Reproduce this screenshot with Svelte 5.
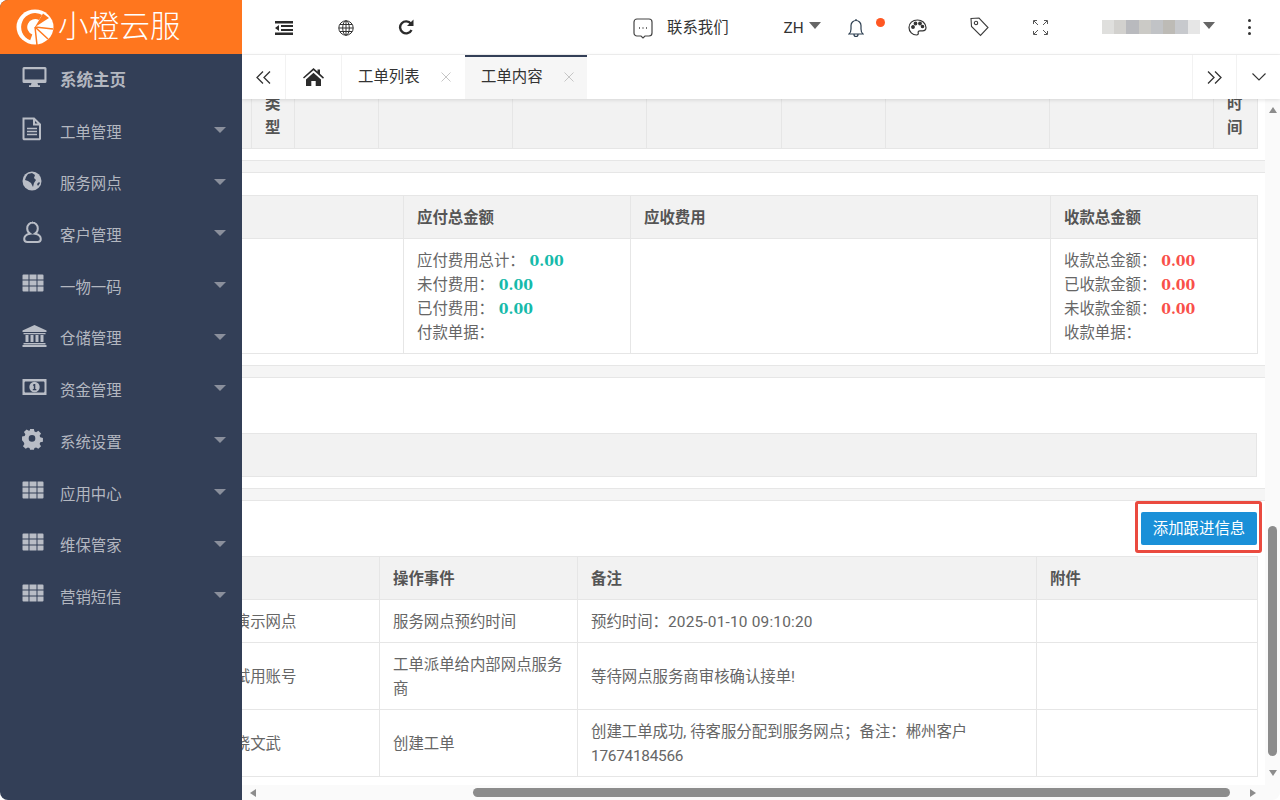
<script>
  const menu = [
    { label: '系统主页', icon: 'desktop', home: true },
    { label: '工单管理', icon: 'file' },
    { label: '服务网点', icon: 'globe' },
    { label: '客户管理', icon: 'user' },
    { label: '一物一码', icon: 'grid' },
    { label: '仓储管理', icon: 'bank' },
    { label: '资金管理', icon: 'money' },
    { label: '系统设置', icon: 'cog' },
    { label: '应用中心', icon: 'grid' },
    { label: '维保管家', icon: 'grid' },
    { label: '营销短信', icon: 'grid' }
  ];

  // column widths of the (horizontally scrolled) tables
  const typeCols = [209, 43, 84, 134, 134, 135, 104, 164, 164, 44];
  const feeCols = [361, 227, 420, 207];
  const logCols = [337, 198, 459, 221];

  const blur = ['#dfdfdd', '#d2d1ce', '#b9babe', '#cbcac6', '#c1c3c6', '#bdbbb6', '#c7c9cd', '#e6e6e6'];

  const paid = [
    ['应付费用总计', '0.00'],
    ['未付费用', '0.00'],
    ['已付费用', '0.00']
  ];
  const received = [
    ['收款总金额', '0.00'],
    ['已收款金额', '0.00'],
    ['未收款金额', '0.00']
  ];
</script>

{#snippet navIcon(name)}
  <svg class="nav-icon" width="26" height="24" viewBox="0 0 26 24">
    {#if name === 'desktop'}
      <path fill-rule="evenodd" d="M2 2h21a1.500 1.500 0 0 1 1.500 1.500v13A1.500 1.500 0 0 1 23 18h-7.500l.6 2.200H18V22H7v-1.800h1.900L9.500 18H2A1.500 1.500 0 0 1 .5 16.500v-13A1.500 1.500 0 0 1 2 2zm.6 2.200v10.300h19.800V4.200z" />
    {:else if name === 'file'}
      <path class="line" d="M1.500 1.500h10.500l6 6v14a.8.8 0 0 1-.8.8H2.300a.8.8 0 0 1-.8-.8zM12 1.500v6h6" />
      <path class="thin" d="M5 11.500h10M5 14.500h10M5 17.500h10" />
    {:else if name === 'globe'}
      <circle cx="10" cy="12" r="9.500" />
      <path class="cut" d="M6 5l4-1 3 2-1 3 2 2-2 3-1 4-2-4-3-2-3-1 1-3zM15 15l2-2 1 1-2 3z" />
    {:else if name === 'user'}
      <path class="line" d="M10 2.500a5.800 5.800 0 0 1 5.800 6c0 2.300-1.300 4.200-2.800 5.200 3.500.6 5.800 2.600 5.800 5.300 0 1.900-1.300 3-3.200 3H5.400c-1.900 0-3.200-1.100-3.200-3 0-2.700 2.300-4.700 5.800-5.300-1.500-1-2.800-2.900-2.800-5.200a5.800 5.800 0 0 1 5.800-6z" />
    {:else if name === 'grid'}
      <path d="M.5 3.500a1 1 0 0 1 1-1h5v5h-6zM7.500 2.500h7v5h-7zM15.500 2.500h5a1 1 0 0 1 1 1v4h-6zM.5 8.500h6v5h-6zM7.500 8.500h7v5h-7zM15.500 8.500h6v5h-6zM.5 14.500h6v5h-5a1 1 0 0 1-1-1zM7.500 14.500h7v5h-7zM15.500 14.500h6v4a1 1 0 0 1-1 1h-5z" />
    {:else if name === 'bank'}
      <path d="M12.500 1L24.500 6.500V8H.5V6.500zM1.500 9h22v1.200h-22zM3.500 11h3v7h-3zM8.500 11h3v7h-3zM13.500 11h3v7h-3zM18.500 11h3v7h-3zM1.500 19h22v1.500h-22zM.5 21h24v2H.5z" />
    {:else if name === 'money'}
      <path fill-rule="evenodd" d="M.5 4h24v16H.5zM3 6.500a2.500 2.500 0 0 1-.5 1v9a2.500 2.500 0 0 1 .5 1h19a2.500 2.500 0 0 1 .5-1v-9a2.500 2.500 0 0 1-.5-1z" />
      <circle cx="12.500" cy="12" r="5.200" />
      <path class="cut" d="M11.600 9h1.700v5h1v1.300h-3.500V14h1v-3.200h-1z" />
    {:else if name === 'cog'}
      <path fill-rule="evenodd" d="M8 2h4l.6 2.800 1.700.7 2.400-1.500 2.800 2.800-1.500 2.400.7 1.700 2.800.6v4l-2.800.6-.7 1.700 1.500 2.400-2.800 2.800-2.400-1.500-1.700.7-.6 1.800H8l-.6-1.800-1.700-.7-2.400 1.500-2.800-2.800 1.500-2.400-.7-1.700L-.5 14v-4l2.800-.6.7-1.700L1.500 5.300 4.300 2.500 6.700 4l1-.4zM10 8.500a3.500 3.500 0 1 0 0 7 3.500 3.500 0 0 0 0-7z" transform="translate(.5 0) scale(.95)" />
    {/if}
  </svg>
{/snippet}

{#snippet closeX()}
  <svg class="x" width="10" height="10" viewBox="0 0 10 10" fill="none" stroke="#c6c6c6" stroke-width="1"><path d="M.5.500l9 9M9.500.500l-9 9" /></svg>
{/snippet}

<div class="app">
  <aside class="side">
    <div class="logo">
      <svg class="logo-mark" width="38" height="36" viewBox="0 0 38 36">
        <ellipse cx="19" cy="18" rx="18.500" ry="17.500" fill="#fff" />
        <path d="M26 5.900A14 14 0 1 0 14.200 31.200L16.300 25.500A8 8 0 1 1 23 11z" fill="#ff7a20" />
        <path d="M19 18L27 4.500 33 9z" fill="#ff7a20" />
        <path d="M19 18L37 20M19 18L32 30M19 18L21 36" stroke="#ff7a20" stroke-width="1.500" fill="none" />
      </svg>
      <span class="logo-text">小橙云服</span>
    </div>
    <nav class="menu">
      {#each menu as item}
        <div class="item" class:home={item.home}>
          {@render navIcon(item.icon)}
          <span class="label">{item.label}</span>
          {#if !item.home}<i class="caret"></i>{/if}
        </div>
      {/each}
    </nav>
  </aside>

  <div class="main">
    <header class="top">
      <svg class="t-indent" width="18" height="14" viewBox="0 0 18 14" fill="#2b2b2b">
        <path d="M0 0h18v2.500H0zM6 4h12v2H6zM6 8h12v2H6zM0 11.500h18V14H0zM0 7l4-3v6z" />
      </svg>
      <svg class="t-globe" width="16" height="16" viewBox="0 0 16 16" fill="none" stroke="#333" stroke-width="1">
        <circle cx="8" cy="8" r="7.200" />
        <ellipse cx="8" cy="8" rx="3.300" ry="7.200" />
        <path d="M8 .8v14.400M.8 8h14.400M1.800 4.500h12.400M1.800 11.500h12.400" />
      </svg>
      <svg class="t-refresh" width="17" height="16" viewBox="0 0 17 16" fill="none">
        <path d="M13.500 11a6 6 0 1 1-.6-6.200" stroke="#2b2b2b" stroke-width="2.400" />
        <path d="M15.500.5v6.500H9z" fill="#2b2b2b" />
      </svg>

      <svg class="t-chat" width="20" height="21" viewBox="0 0 20 21" fill="none" stroke="#444" stroke-width="1.200">
        <path d="M4 1h12a3 3 0 0 1 3 3v11a3 3 0 0 1-3 3h-4l-2 2-2-2H4a3 3 0 0 1-3-3V4a3 3 0 0 1 3-3z" />
        <path d="M6 10h1M9.500 10h1M13 10h1" stroke-width="1.500" />
      </svg>
      <span class="t-contact">联系我们</span>
      <span class="t-lang">ZH</span>
      <i class="t-caret lang"></i>
      <svg class="t-bell" width="16" height="20" viewBox="0 0 16 20" fill="none" stroke="#2c3e50" stroke-width="1.200">
        <path d="M1 16h14c-1.500-1-2-2.500-2-5V7.500a5 5 0 0 0-10 0V11c0 2.500-.5 4-2 5zM6 16.500a2 2 0 0 0 4 0M8 1v1.500" />
      </svg>
      <i class="t-dot"></i>
      <svg class="t-palette" width="19" height="17" viewBox="0 0 19 17" fill="none" stroke="#333" stroke-width="1.200">
        <path d="M9.500 1C4.500 1 1 4.300 1 8.500S4.500 16 8.500 16c1.500 0 2-.9 1.700-2-.3-1.200.4-2.200 1.800-2.200h2.500c2.300 0 3.500-1.300 3.500-3.300C17.500 4 14 1 9.500 1z" />
        <circle cx="5" cy="8" r="1.300" fill="#333" />
        <circle cx="7.500" cy="4.500" r="1.300" fill="#333" />
        <circle cx="12" cy="4.500" r="1.300" fill="#333" />
        <circle cx="14.500" cy="7.500" r="1.200" fill="#333" />
      </svg>
      <svg class="t-tag" width="19" height="20" viewBox="0 0 19 20" fill="none" stroke="#3c3c3c" stroke-width="1.100">
        <path d="M1 1.500l8-.5 9 9.500-7.500 8L1.500 9.500z" />
        <circle cx="6" cy="6" r="1.700" />
      </svg>
      <svg class="t-expand" width="15" height="15" viewBox="0 0 15 15" fill="none" stroke="#555" stroke-width="1">
        <path d="M.5 4V.5H4M1 1l4 4M11 .5h3.500V4M14 1l-4 4M.5 11v3.500H4M1 14l4-4M14.500 11v3.500H11M14 14l-4-4" />
      </svg>
      <div class="t-blur">
        {#each blur as c}<span style="background:{c}"></span>{/each}
      </div>
      <i class="t-caret user"></i>
      <div class="t-more"><i></i><i></i><i></i></div>
    </header>

    <div class="tabs">
      <div class="tab-btn first">
        <svg width="15" height="13" viewBox="0 0 15 13" fill="none" stroke="#333" stroke-width="1.300"><path d="M7 .5L1 6.500l6 6M14 .5L8 6.500l6 6" /></svg>
      </div>
      <div class="tab-btn homet">
        <svg width="21" height="18" viewBox="0 0 21 18" fill="#2b2b2b"><path d="M10.500 0l4 3.500V1.500h2.500v4.300l4 3.700-1 1.200-9.500-8.400L1 10.500 0 9.500zM3 11.500l7.500-6.800 7.500 6.800V18h-5.300v-5H8.300v5H3z" /></svg>
      </div>
      <div class="tab">工单列表{@render closeX()}</div>
      <div class="tab active">工单内容{@render closeX()}</div>
      <div class="tab-fill"></div>
      <div class="tab-btn next">
        <svg width="15" height="13" viewBox="0 0 15 13" fill="none" stroke="#333" stroke-width="1.300"><path d="M1 .5l6 6-6 6M8 .5l6 6-6 6" /></svg>
      </div>
      <div class="tab-btn down">
        <svg width="14" height="8" viewBox="0 0 14 8" fill="none" stroke="#333" stroke-width="1.100"><path d="M.5.5L7 7 13.500.5" /></svg>
      </div>
    </div>

    <div class="body">
      <div class="view">
        <div class="page">
          <table>
            <colgroup>{#each typeCols as w}<col style="width:{w}px" />{/each}</colgroup>
            <thead>
              <tr>
                <th></th><th>类型</th><th></th><th></th><th></th><th></th><th></th><th></th><th></th><th>时间</th>
              </tr>
            </thead>
          </table>
          <div class="band first-band"></div>

          <table class="fee">
            <colgroup>{#each feeCols as w}<col style="width:{w}px" />{/each}</colgroup>
            <thead>
              <tr><th></th><th>应付总金额</th><th>应收费用</th><th>收款总金额</th></tr>
            </thead>
            <tbody>
              <tr>
                <td></td>
                <td>
                  {#each paid as [k, v]}
                    <div>{k}： <b class="teal">{v}</b></div>
                  {/each}
                  <div>付款单据：</div>
                </td>
                <td></td>
                <td>
                  {#each received as [k, v]}
                    <div>{k}： <b class="red">{v}</b></div>
                  {/each}
                  <div>收款单据：</div>
                </td>
              </tr>
            </tbody>
          </table>
          <div class="band second-band"></div>

          <table class="empty">
            <thead><tr><th>&nbsp;</th></tr></thead>
          </table>
          <div class="band third-band"></div>

          <div class="toolbar">
            <div class="mark"><button type="button" class="add">添加跟进信息</button></div>
          </div>

          <table>
            <colgroup>{#each logCols as w}<col style="width:{w}px" />{/each}</colgroup>
            <thead>
              <tr><th></th><th>操作事件</th><th>备注</th><th>附件</th></tr>
            </thead>
            <tbody>
              <tr>
                <td class="who">小橙演示网点</td>
                <td>服务网点预约时间</td>
                <td>预约时间：<span class="date">2025-01-10 09:10:20</span></td>
                <td></td>
              </tr>
              <tr>
                <td class="who">小测试用账号</td>
                <td>工单派单给内部网点服务商</td>
                <td>等待网点服务商审核确认接单!</td>
                <td></td>
              </tr>
              <tr>
                <td class="who">小橙晓文武</td>
                <td>创建工单</td>
                <td>创建工单成功, 待客服分配到服务网点；备注：郴州客户 <span class="phone">17674184566</span></td>
                <td></td>
              </tr>
            </tbody>
          </table>
        </div>
      </div>
      <div class="vbar">
        <i class="arrow up"></i>
        <i class="vthumb"></i>
        <i class="arrow dn"></i>
      </div>
    </div>

    <div class="hbar">
      <i class="arrow lt"></i>
      <i class="hthumb"></i>
      <i class="arrow rt"></i>
    </div>
  </div>
</div>

<style>
  :global(body) {
    background: #fff;
    font-family: Roboto, "Noto Sans CJK SC", sans-serif;
  }
  .app {
    display: flex;
    width: 1280px;
    height: 800px;
    overflow: hidden;
    border-radius: 8px;
    font-size: 15.4px;
    line-height: 24px;
    color: #666;
  }
  i {
    display: block;
  }

  /* sidebar */
  .side {
    width: 242px;
    flex-shrink: 0;
    background: #333f57;
    position: relative;
    z-index: 3;
  }
  .logo {
    height: 54px;
    background: #ff761e;
    display: flex;
    align-items: center;
    padding-left: 16px;
    color: #fff;
  }
  .logo-mark {
    flex-shrink: 0;
  }
  .logo-text {
    margin-left: 4px;
    font-size: 30.500px;
    font-weight: 300;
    line-height: 34px;
    letter-spacing: .2px;
    white-space: nowrap;
  }
  .item {
    height: 51.700px;
    display: flex;
    align-items: center;
    padding: 0 16px 0 22px;
    color: #b3b7c0;
    position: relative;
  }
  .nav-icon {
    flex-shrink: 0;
    fill: #b9bdc6;
    margin-top: -5px;
  }
  .line {
    fill: none;
    stroke: #b9bdc6;
    stroke-width: 2;
  }
  .thin {
    fill: none;
    stroke: #b9bdc6;
    stroke-width: 1.400;
  }
  .cut {
    fill: #333f57;
  }
  .label {
    margin-left: 12px;
    margin-top: 2.400px;
  }
  .item.home .label {
    font-size: 16.500px;
    font-weight: 700;
    margin-top: 3px;
  }
  .caret {
    margin-left: auto;
    width: 0;
    height: 0;
    border-left: 6.500px solid transparent;
    border-right: 6.500px solid transparent;
    border-top: 6.500px solid #8a8f9c;
    margin-top: -3px;
  }

  .main {
    flex: 1;
    min-width: 0;
    display: flex;
    flex-direction: column;
    background: #fff;
  }

  /* top bar */
  .top {
    height: 55px;
    flex-shrink: 0;
    box-sizing: border-box;
    border-bottom: 1px solid #f2f2f2;
    display: flex;
    align-items: center;
    color: #333;
    background: #fff;
  }
  .t-indent { margin-left: 33px; margin-top: 2px; }
  .t-globe { margin-left: 45px; margin-top: 2px; }
  .t-refresh { margin-left: 44px; margin-top: -1px; }
  .t-chat { margin-left: 218px; margin-top: 2px; }
  .t-contact { margin-left: 14px; white-space: nowrap; margin-top: 1px; }
  .t-lang { margin-left: 55px; margin-top: 1px; }
  .t-caret {
    width: 0;
    height: 0;
    border-left: 6px solid transparent;
    border-right: 6px solid transparent;
    border-top: 7px solid #666;
    margin-top: -3px;
  }
  .t-caret.lang { margin-left: 5px; }
  .t-bell { margin-left: 27px; margin-top: 1px; }
  .t-dot {
    width: 9px;
    height: 9px;
    border-radius: 50%;
    background: #ff5722;
    margin-left: 12px;
    margin-top: -10px;
  }
  .t-palette { margin-left: 23px; margin-top: 1px; }
  .t-tag { margin-left: 43px; }
  .t-expand { margin-left: 44px; margin-top: 1px; }
  .t-blur {
    display: flex;
    width: 98px;
    height: 14px;
    margin-left: 54px;
  }
  .t-blur span {
    flex: 1;
  }
  .t-caret.user { margin-left: 3px; }
  .t-more {
    display: flex;
    flex-direction: column;
    gap: 3.500px;
    margin-left: 33px;
  }
  .t-more i {
    width: 3px;
    height: 3px;
    border-radius: 50%;
    background: #333;
  }

  /* tabs */
  .tabs {
    height: 44px;
    flex-shrink: 0;
    display: flex;
    background: #fff;
    position: relative;
    z-index: 2;
    box-shadow: 0 1px 4px rgba(0, 0, 0, 0.12);
    color: #333;
  }
  .tab-btn {
    display: grid;
    place-items: center;
    box-sizing: border-box;
  }
  .tab-btn.first { width: 44px; border-right: 1px solid #f2f2f2; }
  .tab-btn.homet { width: 56px; border-right: 1px solid #f2f2f2; }
  .tab-btn.next { width: 44px; border-left: 1px solid #f2f2f2; }
  .tab-btn.down { width: 44px; border-left: 1px solid #f2f2f2; }
  .tab {
    width: 123px;
    box-sizing: border-box;
    padding-left: 16px;
    display: flex;
    align-items: center;
    white-space: nowrap;
  }
  .tab.active {
    background: #f6f6f6;
    border-top: 2px solid #333f57;
    width: 122px;
    padding-bottom: 2px;
  }
  .x {
    margin-left: 21px;
    flex-shrink: 0;
  }
  .tab-fill {
    flex: 1;
  }

  /* scrolled content */
  .body {
    flex: 1;
    min-height: 0;
    display: flex;
  }
  .view {
    flex: 1;
    min-width: 0;
    overflow: hidden;
  }
  .page {
    margin: -18px 8px 0 -200px;
  }
  table {
    width: 1215px;
    table-layout: fixed;
    border-collapse: collapse;
  }
  th, td {
    border: 1px solid #e6e6e6;
    padding: 10px 13px 8px;
    text-align: left;
    font-weight: 400;
  }
  th {
    background: #f2f2f2;
    font-weight: 700;
    color: #555;
  }
  td.who {
    padding-left: 161px;
    white-space: nowrap;
  }
  .date {
    letter-spacing: .2px;
  }
  .phone {
    letter-spacing: -.27px;
  }
  .teal, .red {
    font-family: "DejaVu Serif", serif;
    font-size: 14px;
    font-weight: 700;
    margin-left: 1px;
  }
  .teal { color: #16baaa; }
  .red { color: #f9504a; }
  .band {
    height: 11px;
    margin-right: -8px;
    background: #f5f5f5;
    border-top: 1px solid #e6e6e6;
    border-bottom: 1px solid #e6e6e6;
  }
  .first-band { margin-top: 11px; margin-bottom: 22px; }
  .second-band { margin-top: 11px; margin-bottom: 55px; }
  .third-band { margin-top: 11px; }
  .toolbar {
    height: 55px;
    display: flex;
    justify-content: flex-end;
    align-items: flex-start;
  }
  .mark {
    box-sizing: border-box;
    width: 127px;
    height: 52px;
    margin-right: -5px;
    padding: 8px 2px 0 3px;
    border: 3px solid #ea4a3f;
    border-radius: 3px;
  }
  .add {
    display: block;
    width: 116px;
    height: 33px;
    padding: 1px 0 0 0;
    border: 0;
    border-radius: 2px;
    background: #1a90d8;
    color: #fff;
    font: inherit;
  }

  /* fake scrollbars */
  .vbar {
    width: 15px;
    flex-shrink: 0;
    background: #fafafa;
    display: flex;
    flex-direction: column;
    align-items: center;
  }
  .vthumb {
    width: 9px;
    height: 230px;
    margin-top: 413px;
    border-radius: 5px;
    background: #8c8c8c;
  }
  .hbar {
    height: 15px;
    flex-shrink: 0;
    background: #fafafa;
    display: flex;
    align-items: center;
  }
  .hthumb {
    width: 757px;
    height: 9px;
    margin-left: 217px;
    border-radius: 5px;
    background: #8c8c8c;
  }
  .arrow {
    width: 0;
    height: 0;
  }
  .arrow.up {
    margin-top: 8px;
    border-left: 4.500px solid transparent;
    border-right: 4.500px solid transparent;
    border-bottom: 6px solid #8c8c8c;
  }
  .arrow.dn {
    margin-top: 14px;
    border-left: 4.500px solid transparent;
    border-right: 4.500px solid transparent;
    border-top: 6px solid #8c8c8c;
  }
  .arrow.lt {
    margin-left: 8px;
    border-top: 4.500px solid transparent;
    border-bottom: 4.500px solid transparent;
    border-right: 6px solid #8c8c8c;
  }
  .arrow.rt {
    margin-left: 20px;
    border-top: 4.500px solid transparent;
    border-bottom: 4.500px solid transparent;
    border-left: 6px solid #8c8c8c;
  }
</style>
